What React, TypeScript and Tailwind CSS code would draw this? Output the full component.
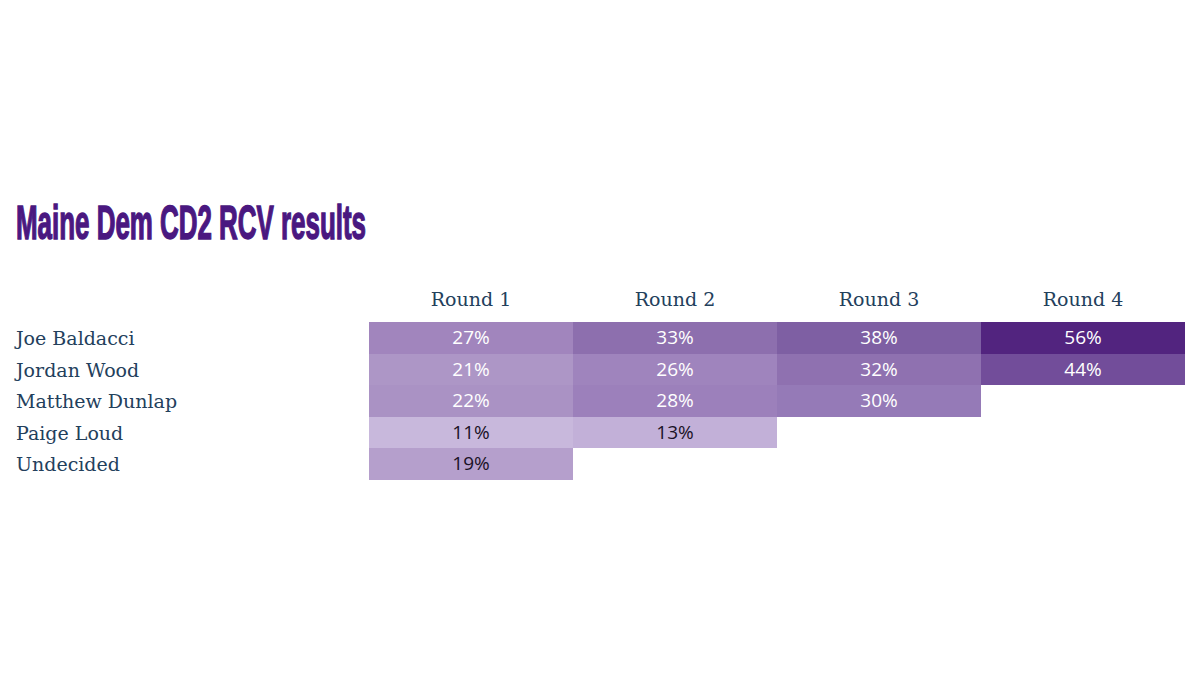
const rounds = ["Round 1", "Round 2", "Round 3", "Round 4"];

type Cell = { value: string; bg: string; dark?: boolean } | null;

const rows: { name: string; cells: Cell[] }[] = [
  {
    name: "Joe Baldacci",
    cells: [
      { value: "27%", bg: "bg-[#a185bd]" },
      { value: "33%", bg: "bg-[#8d6fae]" },
      { value: "38%", bg: "bg-[#7e5fa3]" },
      { value: "56%", bg: "bg-[#52247f]" },
    ],
  },
  {
    name: "Jordan Wood",
    cells: [
      { value: "21%", bg: "bg-[#ad96c6]" },
      { value: "26%", bg: "bg-[#9f84bd]" },
      { value: "32%", bg: "bg-[#8f71b0]" },
      { value: "44%", bg: "bg-[#724d9a]" },
    ],
  },
  {
    name: "Matthew Dunlap",
    cells: [
      { value: "22%", bg: "bg-[#aa92c4]" },
      { value: "28%", bg: "bg-[#9c80bb]" },
      { value: "30%", bg: "bg-[#957ab7]" },
      null,
    ],
  },
  {
    name: "Paige Loud",
    cells: [
      { value: "11%", bg: "bg-[#c8b8dc]", dark: true },
      { value: "13%", bg: "bg-[#c2b0d8]", dark: true },
      null,
      null,
    ],
  },
  {
    name: "Undecided",
    cells: [{ value: "19%", bg: "bg-[#b59fcc]", dark: true }, null, null, null],
  },
];

const serif = "font-['DejaVu_Serif',serif]";

export default function App() {
  return (
    <main className="h-[675px] w-[1200px] overflow-hidden bg-white pl-4 pt-[199px]">
      <h1 className="h-[48px] whitespace-nowrap">
        <span className="inline-block origin-left scale-x-[0.54] font-['Liberation_Sans',sans-serif] text-[48px] font-bold leading-[48px] text-[#4a1880] [-webkit-text-stroke:1.5px_#4a1880]">
          Maine Dem CD2 RCV results
        </span>
      </h1>

      <div className="mt-[40px] grid grid-cols-[353px_repeat(4,204px)]">
        <div className="h-[35px]" />
        {rounds.map((round) => (
          <div
            key={round}
            className={`${serif} h-[35px] text-center text-[19px] leading-[24px] text-[#23405c]`}
          >
            {round}
          </div>
        ))}

        {rows.map((row) => (
          <div key={row.name} className="contents">
            <div className={`${serif} h-[31.5px] text-[19px] leading-[32px] text-[#23405c]`}>
              {row.name}
            </div>
            {row.cells.map((cell, i) =>
              cell ? (
                <div
                  key={i}
                  className={`${cell.bg} h-[31.5px] text-center font-['Open_Sans',sans-serif] text-[19px] leading-[31.5px] ${
                    cell.dark ? "text-[#1a1226]" : "text-white"
                  }`}
                >
                  {cell.value}
                </div>
              ) : (
                <div key={i} className="h-[31.5px]" />
              )
            )}
          </div>
        ))}
      </div>
    </main>
  );
}
